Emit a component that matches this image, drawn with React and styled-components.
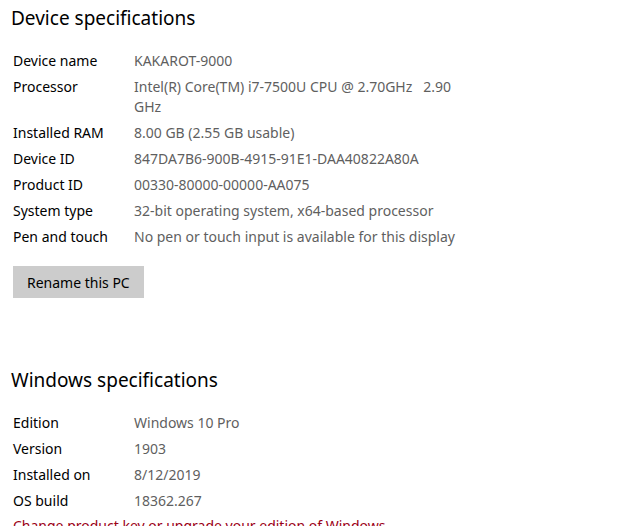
import React from "react";
import styled, { createGlobalStyle } from "styled-components";

const GlobalStyle = createGlobalStyle`
  html, body {
    margin: 0;
    padding: 0;
    background: #ffffff;
  }
  body {
    font-family: "Noto Sans", "Open Sans", sans-serif;
    color: #000;
    overflow: hidden;
  }
`;

const Page = styled.div`
  width: 617px;
  height: 526px;
  overflow: hidden;
  padding: 4px 13px 0 13px;
  box-sizing: border-box;
`;

const Heading = styled.h2`
  margin: 0 0 0 -2px;
  font-size: 19px;
  font-weight: 400;
  line-height: 28px;
  color: #000;
`;

const SpecList = styled.dl`
  margin: 19px 0 0 0;
  display: grid;
  grid-template-columns: 121px 330px;
  row-gap: 6px;
  font-size: 14px;
  line-height: 20px;
`;

const Label = styled.dt`
  margin: 0;
  color: #000;
`;

const Value = styled.dd`
  margin: 0;
  color: #5f5f5f;
  white-space: pre-wrap;
`;

const RenameButton = styled.button`
  margin-top: 19px;
  height: 32px;
  padding: 0 14px;
  border: none;
  background: #cccccc;
  font-family: inherit;
  font-size: 14px;
  color: #000;
  cursor: pointer;
`;

const Section = styled.section`
  margin-top: ${(p) => p.$gap || 0}px;
`;

const Link = styled.a`
  display: block;
  margin-top: 5px;
  font-size: 14px;
  line-height: 20px;
  color: #9b0016;
  text-decoration: none;
`;

const device = [
  ["Device name", "KAKAROT-9000"],
  ["Processor", "Intel(R) Core(TM) i7-7500U CPU @ 2.70GHz   2.90 GHz"],
  ["Installed RAM", "8.00 GB (2.55 GB usable)"],
  ["Device ID", "847DA7B6-900B-4915-91E1-DAA40822A80A"],
  ["Product ID", "00330-80000-00000-AA075"],
  ["System type", "32-bit operating system, x64-based processor"],
  ["Pen and touch", "No pen or touch input is available for this display"],
];

const windows = [
  ["Edition", "Windows 10 Pro"],
  ["Version", "1903"],
  ["Installed on", "8/12/2019"],
  ["OS build", "18362.267"],
];

function Specs({ rows }) {
  return (
    <SpecList>
      {rows.map(([k, v]) => (
        <React.Fragment key={k}>
          <Label>{k}</Label>
          <Value>{v}</Value>
        </React.Fragment>
      ))}
    </SpecList>
  );
}

export default function App() {
  return (
    <Page>
      <GlobalStyle />
      <Section>
        <Heading>Device specifications</Heading>
        <Specs rows={device} />
        <RenameButton>Rename this PC</RenameButton>
      </Section>
      <Section $gap={68}>
        <Heading>Windows specifications</Heading>
        <Specs rows={windows} />
        <Link href="#">Change product key or upgrade your edition of Windows</Link>
      </Section>
    </Page>
  );
}
